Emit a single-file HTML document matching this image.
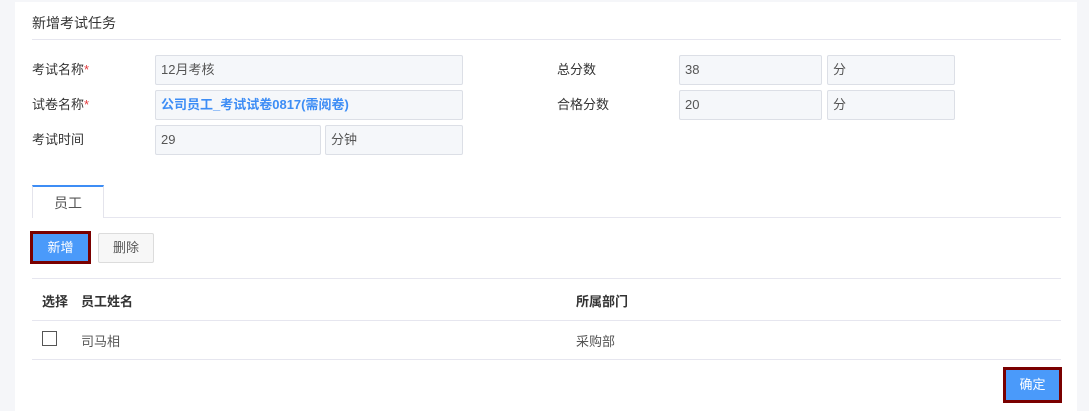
<!DOCTYPE html><html><head><meta charset="utf-8"><style>
*{box-sizing:border-box;margin:0;padding:0}
body{width:1089px;height:411px;background:#f5f6f9;font-family:"Liberation Sans","Noto Sans CJK SC",sans-serif;font-size:13px;color:#333;position:relative;overflow:hidden}
.panel{position:absolute;left:15px;top:2px;width:1062px;height:409px;background:#fff}
.a{position:absolute}
.inp{position:absolute;height:30px;background:#f5f7fa;border:1px solid #dcdfe6;border-radius:2px;padding:0 5px;line-height:28px;color:#555}
.lbl{position:absolute;line-height:30px;color:#333}
.lbl i{color:#e4393c;font-style:normal}
.line{position:absolute;height:1px;background:#e6e6ef;left:32px;width:1029px}
</style></head><body>
<div class="panel"></div>
<div class="a" style="left:32px;top:13px;font-size:14px;color:#333">新增考试任务</div>
<div class="line" style="top:39px"></div>
<div class="lbl" style="left:32px;top:55px">考试名称<i>*</i></div>
<div class="inp" style="left:155px;top:55px;width:308px">12月考核</div>
<div class="lbl" style="left:32px;top:90px">试卷名称<i>*</i></div>
<div class="inp" style="left:155px;top:90px;width:308px;color:#3d8df5;font-weight:600">公司员工_考试试卷0817(需阅卷)</div>
<div class="lbl" style="left:32px;top:125px">考试时间</div>
<div class="inp" style="left:155px;top:125px;width:166px">29</div>
<div class="inp" style="left:325px;top:125px;width:138px">分钟</div>
<div class="lbl" style="left:557px;top:55px">总分数</div>
<div class="inp" style="left:679px;top:55px;width:143px">38</div>
<div class="inp" style="left:827px;top:55px;width:128px">分</div>
<div class="lbl" style="left:557px;top:90px">合格分数</div>
<div class="inp" style="left:679px;top:90px;width:143px">20</div>
<div class="inp" style="left:827px;top:90px;width:128px">分</div>
<div class="a" style="left:32px;top:185px;width:72px;height:33px;border:1px solid #e4e4ec;border-top:2px solid #3d8df5;border-bottom:none;background:#fff;text-align:center;line-height:32px;color:#555;font-size:14px">员工</div>
<div class="line" style="top:217px;left:104px;width:957px"></div>
<div class="a" style="left:30px;top:231px;width:61px;height:33px;background:#4a9afa;border:3px solid #7a0000;color:#fff;text-align:center;line-height:27px">新增</div>
<div class="a" style="left:98px;top:233px;width:56px;height:30px;background:#f7f7f7;border:1px solid #dcdcdc;border-radius:2px;color:#555;text-align:center;line-height:28px">删除</div>
<div class="line" style="top:278px"></div>
<div class="a" style="left:42px;top:291px;font-weight:bold">选择</div>
<div class="a" style="left:81px;top:291px;font-weight:bold">员工姓名</div>
<div class="a" style="left:576px;top:291px;font-weight:bold">所属部门</div>
<div class="line" style="top:320px"></div>
<div class="a" style="left:42px;top:331px;width:15px;height:15px;border:1px solid #555"></div>
<div class="a" style="left:81px;top:331px;color:#555">司马相</div>
<div class="a" style="left:576px;top:331px;color:#555">采购部</div>
<div class="line" style="top:359px"></div>
<div class="a" style="left:1003px;top:367px;width:59px;height:36px;background:#4a9afa;border:3px solid #7a0000;color:#fff;text-align:center;line-height:30px">确定</div>
</body></html>
